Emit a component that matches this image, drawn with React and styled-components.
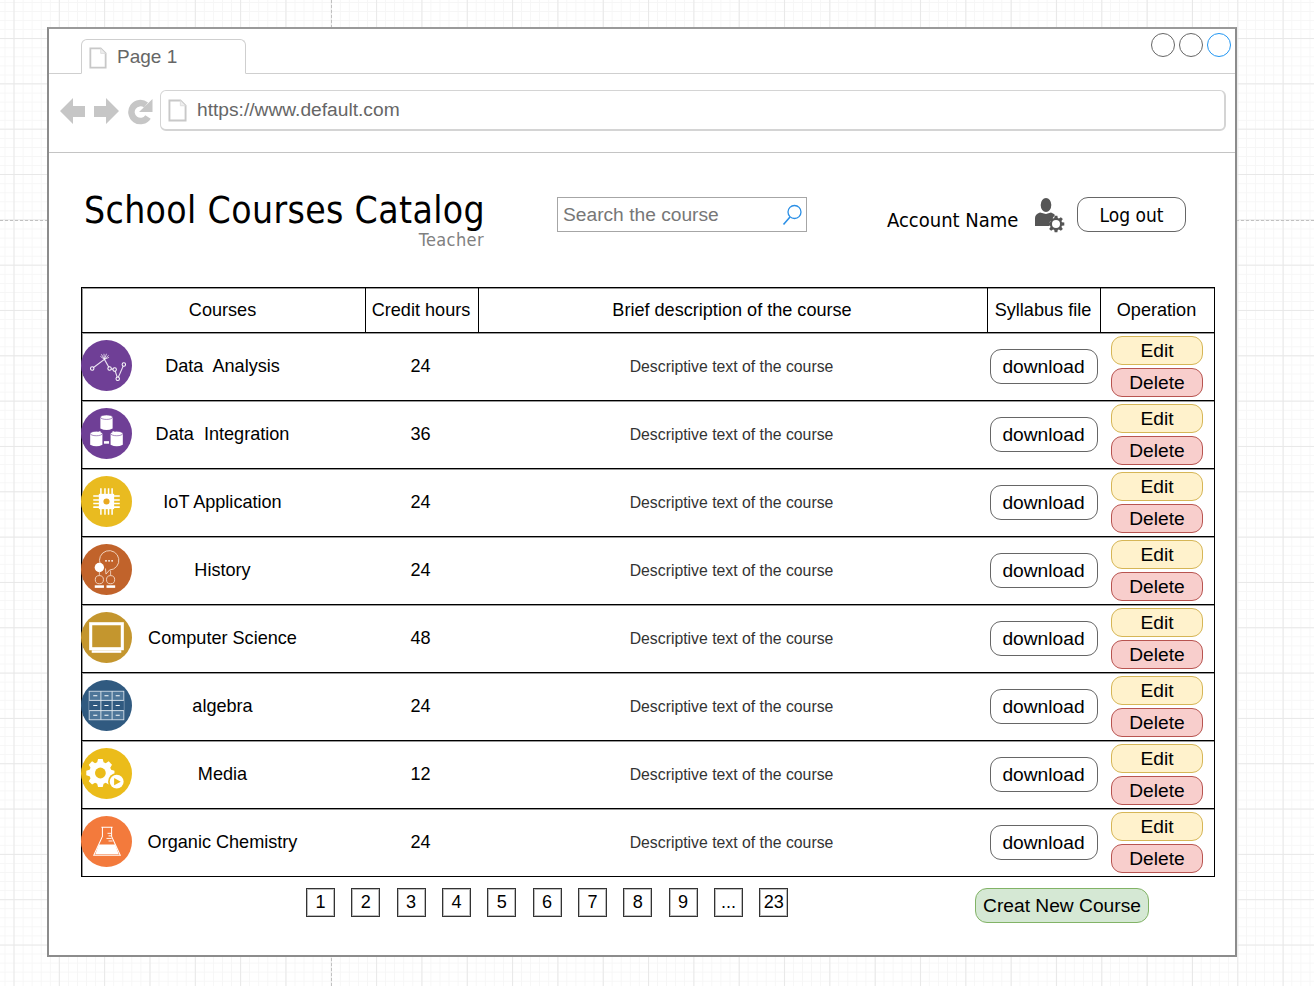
import React from 'react';
import styled, { createGlobalStyle } from 'styled-components';

const GlobalStyle = createGlobalStyle`
  html, body { margin: 0; padding: 0; background: #fff; }
  body { font-family: "Liberation Sans", Arial, sans-serif; color: #000; }
`;

const courses = [
  { name: 'Data  Analysis', hours: 24, icon: 'analysis' },
  { name: 'Data  Integration', hours: 36, icon: 'integration' },
  { name: 'IoT Application', hours: 24, icon: 'iot' },
  { name: 'History', hours: 24, icon: 'history' },
  { name: 'Computer Science', hours: 48, icon: 'computer' },
  { name: 'algebra', hours: 24, icon: 'algebra' },
  { name: 'Media', hours: 12, icon: 'media' },
  { name: 'Organic Chemistry', hours: 24, icon: 'chemistry' },
];

const pages = ['1', '2', '3', '4', '5', '6', '7', '8', '9', '...', '23'];

const Canvas = styled.div`
  position: relative;
  box-sizing: border-box;
  width: 1314px;
  height: 986px;
  overflow: hidden;
  padding: 27px 0 0 47px;
  background-color: #fff;
  background-image:
    linear-gradient(#e8e8e8 1px, transparent 1px),
    linear-gradient(90deg, #e8e8e8 1px, transparent 1px),
    linear-gradient(#f6f6f6 1px, transparent 1px),
    linear-gradient(90deg, #f6f6f6 1px, transparent 1px);
  background-size: 45.33px 45.33px, 45.33px 45.33px, 9.07px 9.07px, 9.07px 9.07px;
  background-position: 0 38px, 13.5px 0, 0 2px, 4.5px 0;
`;

const PageBreak = styled.div`
  position: absolute;
  ${(p) => (p.$vertical
    ? 'left: 331px; top: 0; height: 986px; border-left: 1px dashed #c0c0c0;'
    : 'top: 220px; left: 0; width: 1314px; border-top: 1px dashed #c0c0c0;')}
`;

const Window = styled.div`
  position: relative;
  box-sizing: border-box;
  width: 1190px;
  height: 930px;
  background: #fff;
  border: 2px solid #8c8c8c;
  border-top-color: #9a9a9a;
`;

const TabBar = styled.div`
  box-sizing: border-box;
  height: 45px;
  display: flex;
  justify-content: space-between;
  align-items: flex-start;
  padding: 4px 4px 0 32px;
  border-bottom: 1px solid #cfcfcf;
`;

const Tab = styled.div`
  box-sizing: border-box;
  width: 165px;
  height: 35px;
  margin-top: 6px;
  display: flex;
  align-items: center;
  gap: 10px;
  padding-left: 7px;
  background: #fff;
  border: 1px solid #cfcfcf;
  border-bottom: 1px solid #fff;
  border-radius: 6px 6px 0 0;
  font-size: 19px;
  color: #666;
  svg { margin-top: 3px; }
`;

const Controls = styled.div`
  display: flex;
  gap: 4px;
`;

const Dot = styled.span`
  box-sizing: border-box;
  width: 24px;
  height: 24px;
  border-radius: 50%;
  border: 1px solid ${(p) => (p.$active ? '#2196f3' : '#666')};
`;

const AddressRow = styled.div`
  box-sizing: border-box;
  height: 79px;
  display: flex;
  align-items: center;
  gap: 7px;
  padding: 0 9px 5px 11px;
  border-bottom: 1px solid #c4c4c4;
`;

const NavIcons = styled.div`
  display: flex;
  align-items: center;
  gap: 8px;
`;

const UrlBox = styled.div`
  box-sizing: border-box;
  flex: 1;
  height: 41px;
  display: flex;
  align-items: center;
  gap: 10px;
  padding-left: 7px;
  border: 1px solid #d4d4d4;
  border-bottom-width: 2px;
  border-right-width: 2px;
  border-radius: 6px;
  font-size: 19.2px;
  color: #666;
`;

const Header = styled.div`
  box-sizing: border-box;
  height: 134px;
  display: flex;
  padding: 36px 0 0 35px;
`;

const TitleBlock = styled.div`
  width: 400px;
  display: flex;
  flex-direction: column;
  align-items: flex-end;
`;

const Title = styled.h1`
  margin: 2px 0 0;
  align-self: flex-start;
  white-space: nowrap;
  font-family: "DejaVu Sans", Verdana, sans-serif;
  font-stretch: condensed;
  font-weight: 400;
  font-size: 37px;
  letter-spacing: 0.36px;
  line-height: 40px;
`;

const Subtitle = styled.div`
  font-family: "DejaVu Sans", Verdana, sans-serif;
  font-stretch: condensed;
  font-size: 18px;
  letter-spacing: 0.4px;
  line-height: 18px;
  color: #808080;
`;

const SearchBox = styled.div`
  box-sizing: border-box;
  width: 250px;
  height: 35px;
  margin: 8px 0 0 73px;
  display: flex;
  align-items: center;
  justify-content: space-between;
  padding: 0 3px 0 5px;
  border: 1px solid #a6a6a6;
  font-size: 19.2px;
  color: #777;
`;

const Account = styled.div`
  display: flex;
  align-items: flex-start;
  margin: 8px 0 0 80px;
`;

const AccountName = styled.span`
  width: 148px;
  margin-top: 11px;
  font-family: "DejaVu Sans", Verdana, sans-serif;
  font-stretch: condensed;
  font-size: 20px;
  line-height: 24px;
  white-space: nowrap;
`;

const PillButton = styled.div`
  box-sizing: border-box;
  display: flex;
  align-items: center;
  justify-content: center;
  width: ${(p) => p.$w}px;
  height: ${(p) => p.$h}px;
  border: 1px solid #666;
  border-radius: 11px;
  background: #fff;
  font-size: 19.2px;
  white-space: nowrap;
`;

const LogOut = styled(PillButton)`
  margin-left: 12px;
  font-family: "DejaVu Sans", Verdana, sans-serif;
  font-stretch: condensed;
  font-size: 19px;
`;

const Table = styled.div`
  box-sizing: border-box;
  width: 1134px;
  margin-left: 32px;
  border: 1px solid #000;
  box-shadow: inset 1px 1px 0 #999;
`;

const HeadRow = styled.div`
  display: grid;
  grid-template-columns: 283px 113px 509px 113px 1fr;
  height: 44px;
`;

const HeadCell = styled.div`
  display: flex;
  align-items: center;
  justify-content: center;
  padding-right: 2px;
  font-size: 18.1px;
  white-space: nowrap;
  border-left: ${(p) => (p.$first ? '0' : '1px solid #000')};
`;

const Row = styled.div`
  display: grid;
  grid-template-columns: 283px 113px 509px 113px 1fr;
  height: 68px;
  box-sizing: border-box;
  border-top: 1px solid #000;
  box-shadow: inset 0 1px 0 #999;
`;

const CourseCell = styled.div`
  position: relative;
  display: flex;
  align-items: center;
  justify-content: center;
  padding-right: 2px;
  font-size: 18.1px;
  white-space: pre;
`;

const IconBadge = styled.div`
  position: absolute;
  left: -1px;
  top: 7px;
  width: 51px;
  height: 51px;
  line-height: 0;
`;

const HoursCell = styled.div`
  display: flex;
  align-items: center;
  justify-content: center;
  padding-right: 2px;
  font-size: 18.1px;
`;

const DescCell = styled.div`
  display: flex;
  align-items: center;
  justify-content: center;
  padding-right: 2px;
  font-size: 15.8px;
  color: #333;
`;

const FileCell = styled.div`
  display: flex;
  align-items: center;
  justify-content: center;
`;

const OpsCell = styled.div`
  display: flex;
  flex-direction: column;
  align-items: center;
  justify-content: center;
  gap: 3px;
`;

const OpButton = styled.div`
  box-sizing: border-box;
  width: 92px;
  height: 29px;
  display: flex;
  align-items: center;
  justify-content: center;
  border-radius: 11px;
  border: 1px solid ${(p) => (p.$danger ? '#b85450' : '#d6b656')};
  background: ${(p) => (p.$danger ? '#f8cecc' : '#fff2cc')};
  font-size: 19.2px;
`;

const Footer = styled.div`
  display: flex;
  align-items: flex-start;
  justify-content: space-between;
  padding: 11px 86px 0 257px;
`;

const Pager = styled.div`
  display: flex;
  gap: 16.33px;
`;

const PageBox = styled.div`
  box-sizing: border-box;
  width: 29px;
  height: 29px;
  display: flex;
  align-items: center;
  justify-content: center;
  border: 1px solid #333;
  box-shadow: 0 0 0 1px #bbb inset;
  font-size: 18.1px;
`;

const CreateButton = styled.div`
  box-sizing: border-box;
  width: 174px;
  height: 35px;
  display: flex;
  align-items: center;
  justify-content: center;
  border: 1px solid #82b366;
  border-radius: 12px;
  background: #d5e8d4;
  font-size: 19.2px;
  white-space: nowrap;
`;

const PageIcon = ({ w = 19, h = 23 }) => (
  <svg width={w} height={h} viewBox="0 0 20 24" preserveAspectRatio="none">
    <path d="M1.5 1.5H13L18.5 7V22.5H1.5Z" fill="#fff" stroke="#c8c8c8" strokeWidth="2" />
    <path d="M13 1.5V7H18.5" fill="#eee" stroke="#ddd" strokeWidth="1" />
  </svg>
);

const BackIcon = () => (
  <svg width="26" height="28" viewBox="0 0 26 28">
    <path d="M0 14L13 1V9H25V20H13V27Z" fill="#c6c6c6" />
  </svg>
);

const ForwardIcon = () => (
  <svg width="26" height="28" viewBox="0 0 26 28">
    <path d="M25 14L12 1V9H0V20H12V27Z" fill="#c6c6c6" />
  </svg>
);

const RefreshIcon = () => (
  <svg width="25" height="28" viewBox="0 0 25 28">
    <path d="M20 20A9 9 0 1 1 18 8" fill="none" stroke="#c6c6c6" strokeWidth="6.5" />
    <path d="M24.5 2V15H11Z" fill="#c6c6c6" />
  </svg>
);

const SearchIcon = () => (
  <svg width="22" height="24" viewBox="0 0 22 24">
    <circle cx="13.5" cy="9" r="6.5" fill="none" stroke="#2a8fe6" strokeWidth="1.3" />
    <path d="M9 14L2.5 21.5" stroke="#2a8fe6" strokeWidth="1.6" />
  </svg>
);

const gearTeeth = (cx, cy, r1, r2, n) => {
  const pts = [];
  for (let i = 0; i < n; i++) {
    const a = (i / n) * Math.PI * 2;
    const w = Math.PI / n / 1.9;
    pts.push([cx + r1 * Math.cos(a - w * 1.4), cy + r1 * Math.sin(a - w * 1.4)]);
    pts.push([cx + r2 * Math.cos(a - w * 0.8), cy + r2 * Math.sin(a - w * 0.8)]);
    pts.push([cx + r2 * Math.cos(a + w * 0.8), cy + r2 * Math.sin(a + w * 0.8)]);
    pts.push([cx + r1 * Math.cos(a + w * 1.4), cy + r1 * Math.sin(a + w * 1.4)]);
  }
  return pts.map((p) => p[0].toFixed(2) + ',' + p[1].toFixed(2)).join(' ');
};

const UserGearIcon = () => (
  <svg width="30" height="36" viewBox="0 0 30 36">
    <ellipse cx="11" cy="8" rx="5.3" ry="7" fill="#555" />
    <path d="M0 29V21Q0 17 5 15.5L11 17L16 15.5Q19 16.5 20 18L14 26V29Z" fill="#555" />
    <polygon points={gearTeeth(21, 27, 6.2, 8.4, 8)} fill="#555" />
    <circle cx="21" cy="27" r="4" fill="#fff" />
  </svg>
);

const CircleBase = ({ color, children }) => (
  <svg width="51" height="51" viewBox="0 0 50 50">
    <circle cx="25" cy="25" r="25" fill={color} />
    {children}
  </svg>
);

const Cylinder = ({ x, y }) => (
  <g>
    <path d={`M${x} ${y + 2}V${y + 13}Q${x + 6} ${y + 16} ${x + 12} ${y + 13}V${y + 2}Z`} fill="#fff" />
    <ellipse cx={x + 6} cy={y + 2} rx="6" ry="2.2" fill="#fff" stroke="#6f3f96" strokeWidth="0.6" />
  </g>
);

const icons = {
  analysis: (
    <CircleBase color="#6f3f96">
      <path d="M11 28L23 19L28 28L33 29L36 38L42 24" fill="none" stroke="#e9dff0" strokeWidth="1.1" />
      <g fill="#6f3f96" stroke="#fff" strokeWidth="1">
        <circle cx="11" cy="28" r="1.7" />
        <circle cx="28" cy="28" r="1.7" />
        <circle cx="33" cy="29" r="1.7" />
        <circle cx="36" cy="38" r="1.7" />
        <circle cx="42" cy="24" r="1.7" />
      </g>
      <path d="M23 19L20 14M23 19L22.5 13.5M23 19L25 13.5M23 19L27 15M23 19L19 16M23 19L27.5 17" stroke="#fff" strokeWidth="0.7" />
    </CircleBase>
  ),
  integration: (
    <CircleBase color="#6f3f96">
      <Cylinder x={19} y={7} />
      <Cylinder x={9} y={23} />
      <Cylinder x={29} y={23} />
      <rect x="22.5" y="32.5" width="5" height="2.5" fill="#fff" />
      <path d="M19 23L16 25M31 23L34 25" stroke="#fff" strokeWidth="1.2" />
    </CircleBase>
  ),
  iot: (
    <CircleBase color="#e9bb20">
      <path d="M19.5 12V38M23.5 12V38M27 12V38M30.5 12V38M12 19.5H38M12 23.5H38M12 27H38M12 30.5H38" stroke="#fff" strokeWidth="1.5" />
      <rect x="17.5" y="17.5" width="15" height="15" fill="#fff" />
      <circle cx="25" cy="25" r="3" fill="#e9a820" />
    </CircleBase>
  ),
  history: (
    <CircleBase color="#c1632b">
      <path d="M19 20A9.5 9.5 0 1 1 28 25.5L24.5 29.5L24 24" fill="none" stroke="#f3d9c6" strokeWidth="0.9" />
      <circle cx="24.5" cy="16.5" r="0.9" fill="#fff" />
      <circle cx="27.5" cy="16.5" r="0.9" fill="#fff" />
      <circle cx="30.5" cy="16.5" r="0.9" fill="#fff" />
      <circle cx="18" cy="23" r="4.6" fill="#fff" />
      <path d="M18 27V31M29 26V31" stroke="#f3d9c6" strokeWidth="0.8" />
      <circle cx="18" cy="35" r="4" fill="none" stroke="#f3d9c6" strokeWidth="0.9" />
      <circle cx="29" cy="35" r="4" fill="none" stroke="#f3d9c6" strokeWidth="0.9" />
      <rect x="13.5" y="40.5" width="9" height="2.5" fill="#fff" />
      <rect x="25" y="40.5" width="8.5" height="2.5" fill="#fff" />
    </CircleBase>
  ),
  computer: (
    <CircleBase color="#c4962e">
      <rect x="9.5" y="11.5" width="31" height="24.5" fill="none" stroke="#fff" strokeWidth="3" />
      <rect x="10.5" y="37.5" width="29" height="2.5" fill="#fff" />
    </CircleBase>
  ),
  algebra: (
    <CircleBase color="#305a80">
      <rect x="8" y="11" width="34" height="28" fill="#4e7699" stroke="#dfe8ef" strokeWidth="0.8" />
      <rect x="8" y="20" width="34" height="10" fill="#305a80" />
      <path d="M19.5 11V39M30.5 11V39M8 20H42M8 30H42" stroke="#dfe8ef" strokeWidth="0.9" />
      <path d="M12 15.5H16M23 15.5H27M34 15.5H38M12 25H16M23 25H27M34 25H38M12 34.5H16M23 34.5H27M34 34.5H38" stroke="#fff" strokeWidth="1" />
    </CircleBase>
  ),
  media: (
    <CircleBase color="#ebbc1a">
      <polygon points={gearTeeth(19, 24.5, 11, 14, 8)} fill="#fff" />
      <circle cx="19" cy="24.5" r="5.3" fill="#ebbc1a" />
      <circle cx="35" cy="33" r="8.5" fill="#ebbc1a" />
      <circle cx="35" cy="33" r="6.8" fill="#fff" />
      <path d="M32.5 29.5L39 33L32.5 36.5Z" fill="#ebbc1a" />
    </CircleBase>
  ),
  chemistry: (
    <CircleBase color="#f37a3c">
      <path d="M20 11H31M21 11V20L12.5 38.5H38.5L30 20V11" fill="none" stroke="#fff" strokeWidth="1" />
      <path d="M17.5 28H33.5L37 37.5H14Z" fill="#fff" />
      <path d="M26 17H29.5M27 19.5H29.5M25 22H30M27 24.5H31" stroke="#fff" strokeWidth="0.9" />
    </CircleBase>
  ),
};

export default function App() {
  return (
    <>
      <GlobalStyle />
      <Canvas>
        <PageBreak $vertical />
        <PageBreak />
        <Window>
          <TabBar>
            <Tab><PageIcon w={18} h={22} />Page 1</Tab>
            <Controls>
              <Dot />
              <Dot />
              <Dot $active />
            </Controls>
          </TabBar>
          <AddressRow>
            <NavIcons>
              <BackIcon />
              <ForwardIcon />
              <RefreshIcon />
            </NavIcons>
            <UrlBox><PageIcon />https://www.default.com</UrlBox>
          </AddressRow>
          <Header>
            <TitleBlock>
              <Title>School Courses Catalog</Title>
              <Subtitle>Teacher</Subtitle>
            </TitleBlock>
            <SearchBox>Search the course<SearchIcon /></SearchBox>
            <Account>
              <AccountName>Account Name</AccountName>
              <UserGearIcon />
              <LogOut $w={109} $h={35}>Log out</LogOut>
            </Account>
          </Header>
          <Table>
            <HeadRow>
              <HeadCell $first>Courses</HeadCell>
              <HeadCell>Credit hours</HeadCell>
              <HeadCell>Brief description of the course</HeadCell>
              <HeadCell>Syllabus file</HeadCell>
              <HeadCell>Operation</HeadCell>
            </HeadRow>
            {courses.map((c) => (
              <Row key={c.name}>
                <CourseCell>
                  <IconBadge>{icons[c.icon]}</IconBadge>
                  {c.name}
                </CourseCell>
                <HoursCell>{c.hours}</HoursCell>
                <DescCell>Descriptive text of the course</DescCell>
                <FileCell>
                  <PillButton $w={108} $h={35}>download</PillButton>
                </FileCell>
                <OpsCell>
                  <OpButton>Edit</OpButton>
                  <OpButton $danger>Delete</OpButton>
                </OpsCell>
              </Row>
            ))}
          </Table>
          <Footer>
            <Pager>
              {pages.map((p) => (
                <PageBox key={p}>{p}</PageBox>
              ))}
            </Pager>
            <CreateButton>Creat New Course</CreateButton>
          </Footer>
        </Window>
      </Canvas>
    </>
  );
}
